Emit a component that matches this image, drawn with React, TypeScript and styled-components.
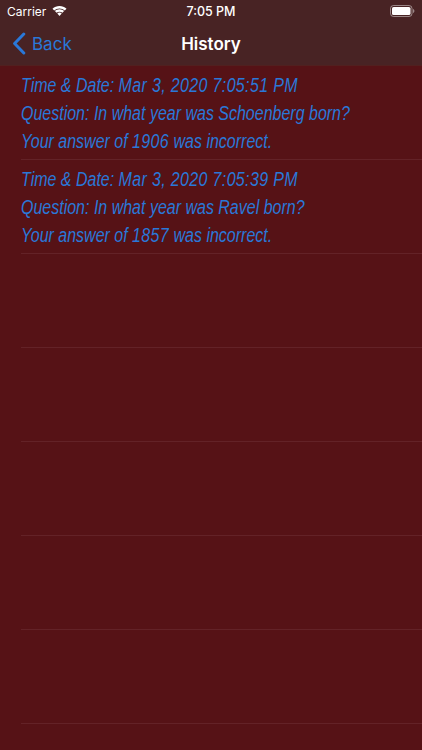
import styled, { createGlobalStyle } from "styled-components"

const GlobalStyle = createGlobalStyle`
	html, body {
		margin: 0;
		padding: 0;
		background: #561216;
	}
`

const entries = [
	{
		time: "Mar 3, 2020 7:05:51 PM",
		question: "In what year was Schoenberg born?",
		answer: "1906"
	},
	{
		time: "Mar 3, 2020 7:05:39 PM",
		question: "In what year was Ravel born?",
		answer: "1857"
	},
	null,
	null,
	null,
	null,
	null,
	null
]

export default function App() {
	return (
		<Screen>
			<GlobalStyle />
			<Header>
				<StatusBar>
					<StatusLeft>
						<span>Carrier</span>
						<WifiIcon />
					</StatusLeft>
					<StatusTime>7:05 PM</StatusTime>
					<StatusRight>
						<BatteryIcon />
					</StatusRight>
				</StatusBar>
				<NavBar>
					<BackButton>
						<svg width="14" height="23" viewBox="0 0 14 23" fill="none">
							<path d="M11.8 2 L2.6 11.5 L11.8 21" stroke="#2a78d8" strokeWidth="3" strokeLinecap="round" strokeLinejoin="round" />
						</svg>
						<span>Back</span>
					</BackButton>
					<NavTitle>History</NavTitle>
				</NavBar>
			</Header>
			<List>
				{entries.map((entry, i) => (
					<Row key={i}>
						{entry && (
							<RowText>
								<Line>Time &amp; Date: <Digits>{entry.time}</Digits></Line>
								<Line>Question: {entry.question}</Line>
								<Line>Your answer of <Digits>{entry.answer}</Digits> was incorrect.</Line>
							</RowText>
						)}
					</Row>
				))}
			</List>
		</Screen>
	)
}

function WifiIcon() {
	return (
		<svg width="15" height="11" viewBox="0 0 15 11" fill="#fff">
			<path d="M7.5 2.4c2 0 3.900.8 5.300 2.100l1.700-1.800C12.600.9 10.200 0 7.500 0S2.400.9.500 2.700l1.700 1.800C3.600 3.200 5.500 2.400 7.500 2.400z" />
			<path d="M7.5 5.700c1.100 0 2.100.4 2.900 1.100l1.700-1.800C10.900 3.900 9.300 3.200 7.500 3.200S4.100 3.900 2.900 5l1.700 1.800c.8-.7 1.800-1.100 2.900-1.100z" />
			<path d="M7.500 6.600c-.9 0-1.600.3-2.200.9l2.200 2.500 2.200-2.500c-.6-.6-1.300-.9-2.200-.9z" />
		</svg>
	)
}

function BatteryIcon() {
	return (
		<svg width="25" height="12" viewBox="0 0 25 12" fill="none">
			<rect x="0.5" y="0.5" width="21.500" height="11" rx="3" stroke="#fff" strokeOpacity="0.45" />
			<rect x="2" y="2" width="18.500" height="8" rx="1.600" fill="#fff" />
			<path d="M23 4v4c.8-.3 1.400-1.100 1.400-2S23.800 4.300 23 4z" fill="#fff" fillOpacity="0.45" />
		</svg>
	)
}

// Styled Components //

const Screen = styled.div`
	width: 422px;
	height: 750px;
	overflow: hidden;
	background: #561216;
	font-family: "Inter", "Liberation Sans", sans-serif;
`

const Header = styled.header`
	height: 66px;
	box-sizing: border-box;
	background: #482324;
	border-bottom: 1px solid #51201f;
`

const StatusBar = styled.div`
	height: 22px;
	padding: 0 7px;
	display: grid;
	grid-template-columns: 1fr auto 1fr;
	align-items: center;
	color: #fff;
	font-size: 12px;
`

const StatusLeft = styled.div`
	display: flex;
	align-items: center;
	gap: 6px;
`

const StatusTime = styled.div`
	font-size: 12.500px;
	font-weight: 500;
`

const StatusRight = styled.div`
	display: flex;
	justify-content: flex-end;
`

const NavBar = styled.nav`
	position: relative;
	height: 43px;
	display: flex;
	align-items: center;
	justify-content: center;
`

const BackButton = styled.div`
	position: absolute;
	left: 12px;
	top: 10px;
	display: flex;
	align-items: center;
	gap: 6px;
	color: #2a78d8;
	font-size: 17px;
`

const NavTitle = styled.div`
	color: #fff;
	font-size: 17px;
	font-weight: 600;
`

const List = styled.main`
	display: flex;
	flex-direction: column;
`

const Row = styled.div`
	height: 94px;
	box-sizing: border-box;
	margin-left: 21px;
	padding-top: 5px;
	border-bottom: 1px solid #632227;
`

const RowText = styled.div`
	display: flex;
	flex-direction: column;
	transform: scaleX(0.78);
	transform-origin: left top;
	width: 520px;
`

const Line = styled.div`
	height: 28px;
	line-height: 27px;
	color: #2a78d8;
	font-family: "Liberation Sans", sans-serif;
	font-size: 20.500px;
	font-style: italic;
	white-space: nowrap;
`

const Digits = styled.span`
	letter-spacing: 0.45px;
`
